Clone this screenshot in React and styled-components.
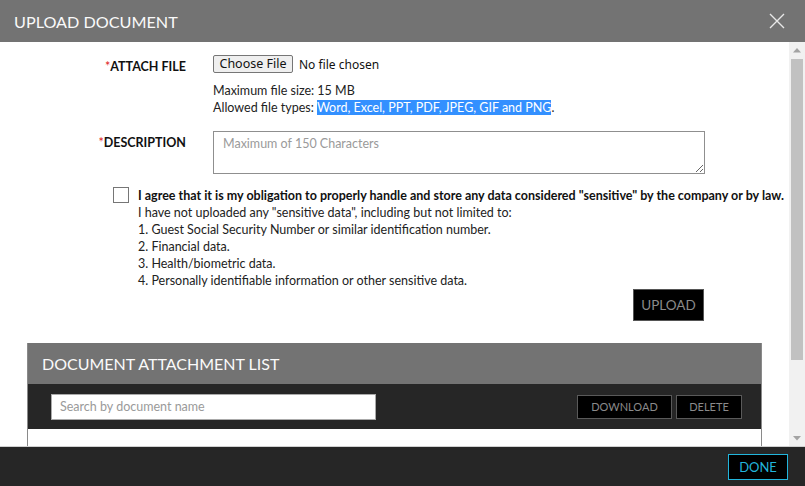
import styled, { createGlobalStyle } from 'styled-components'

const GlobalStyle = createGlobalStyle`
  html, body {
    margin: 0;
    padding: 0;
    background: #ffffff;
  }
  body {
    font-family: Lato, "Liberation Sans", sans-serif;
    color: #222;
  }
  * {
    box-sizing: border-box;
  }
`

const Modal = styled.div`
  width: 805px;
  height: 486px;
  display: flex;
  flex-direction: column;
  background: #fff;
`

const ModalHead = styled.div`
  height: 42px;
  flex-shrink: 0;
  background: #737373;
  display: flex;
  align-items: center;
  justify-content: space-between;
  padding: 0 14px;

  h2 {
    margin: 0;
    color: #fafafa;
    font-size: 16.2px;
    font-weight: 400;
  }
`

const CloseButton = styled.button`
  width: 18px;
  height: 18px;
  padding: 0;
  border: 0;
  background: transparent;
  cursor: pointer;
  display: inline-flex;
  margin-right: 5px;
`

const ModalBody = styled.div`
  flex: 1;
  min-height: 0;
  display: flex;
  background: #fff;
  border-bottom: 1px solid #d0d0d0;
`

const Content = styled.div`
  flex: 1;
  min-width: 0;
  overflow: hidden;
  padding: 13px 0 25px;
`

const ScrollBar = styled.div`
  width: 16px;
  flex-shrink: 0;
  background: #f1f1f1;
  display: flex;
  flex-direction: column;
  align-items: center;
`

const ScrollArrow = styled.div`
  height: 16px;
  width: 16px;
  display: flex;
  align-items: center;
  justify-content: center;
  margin-top: ${({ $down }) => ($down ? 'auto' : '0')};
`

const ScrollThumb = styled.div`
  width: 12px;
  height: 301px;
  margin-top: 1px;
  background: #c1c1c1;
`

const FormRow = styled.div`
  display: grid;
  grid-template-columns: 186px 1fr;
  column-gap: 27px;
  margin-bottom: ${({ $gap }) => $gap || 0}px;
`

const Label = styled.label`
  text-align: right;
  font-size: 12.5px;
  font-weight: 700;
  text-transform: uppercase;
  padding-top: ${({ $top }) => $top || 0}px;
  color: #111;

  span {
    color: #e02020;
    font-weight: 400;
  }
`

const FileLine = styled.div`
  display: flex;
  align-items: center;
  gap: 6px;
  height: 18px;
  font-family: "Noto Sans", "Open Sans", sans-serif;
  font-size: 12px;
  color: #111;
`

const FileButton = styled.button`
  height: 18px;
  width: 80px;
  padding: 0;
  font-family: "Noto Sans", "Open Sans", sans-serif;
  font-size: 12.5px;
  line-height: 16px;
  color: #111;
  background: #efefef;
  border: 1px solid #767676;
  border-radius: 2px;
`

const Hint = styled.div`
  margin-top: 9px;
  font-size: 12.5px;
  line-height: 17px;
  color: #222;

  mark {
    background: #3390ff;
    color: #fff;
  }
`

const TextArea = styled.textarea`
  width: 492px;
  height: 43px;
  resize: vertical;
  border: 1px solid #8f8f8f;
  padding: 4px 9px;
  font-family: Lato, sans-serif;
  font-size: 12.5px;
  color: #222;
  outline: none;

  &::placeholder {
    color: #9a9a9a;
  }
`

const Consent = styled.div`
  display: flex;
  gap: 9px;
  padding-left: 113px;
  margin-top: 10px;
`

const CheckBox = styled.span`
  width: 16px;
  height: 16px;
  flex-shrink: 0;
  border: 1px solid #767676;
  background: #fff;
`

const ConsentText = styled.div`
  font-size: 12.5px;
  line-height: 17px;
  color: #222;

  strong {
    display: block;
    font-weight: 700;
    color: #111;
    white-space: nowrap;
  }
`

const UploadRow = styled.div`
  display: flex;
  justify-content: flex-end;
  padding-right: 85px;
`

const UploadButton = styled.button`
  width: 71px;
  height: 32px;
  background: #000;
  border: 1px solid #555;
  color: #8a8a8a;
  font-family: Lato, sans-serif;
  font-size: 13.5px;
  text-transform: uppercase;
  cursor: pointer;
`

const ListPanel = styled.div`
  margin: 22px 27px 0;
  border-left: 1px solid #8a8a8a;
  border-right: 1px solid #8a8a8a;
`

const ListHead = styled.div`
  height: 41px;
  background: #737373;
  display: flex;
  align-items: center;
  padding: 0 14px;

  h3 {
    margin: 0;
    color: #fafafa;
    font-size: 16px;
    font-weight: 400;
  }
`

const Toolbar = styled.div`
  height: 45px;
  background: #262626;
  display: flex;
  align-items: center;
  justify-content: space-between;
  padding: 0 19px 0 23px;
`

const Search = styled.input`
  width: 325px;
  height: 26px;
  border: 1px solid #aaa;
  padding: 0 8px;
  font-family: Lato, sans-serif;
  font-size: 12.5px;
  outline: none;

  &::placeholder {
    color: #9a9a9a;
  }
`

const ToolButtons = styled.div`
  display: flex;
  gap: 4px;
`

const ToolButton = styled.button`
  height: 24px;
  width: ${({ $w }) => $w}px;
  background: #000;
  border: 1px solid #5a5a5a;
  color: #8a8a8a;
  font-family: Lato, sans-serif;
  font-size: 11px;
  text-transform: uppercase;
  cursor: pointer;
`

const ListArea = styled.div`
  height: 90px;
  background: #fff;
`

const ModalFoot = styled.div`
  height: 39px;
  flex-shrink: 0;
  background: #262626;
  display: flex;
  align-items: center;
  justify-content: flex-end;
  padding: 0 17px 0 0;
`

const DoneButton = styled.button`
  width: 60px;
  height: 26px;
  margin-top: 1px;
  background: #000;
  border: 1px solid #22b5dc;
  color: #22b5dc;
  font-family: Lato, sans-serif;
  font-size: 13px;
  text-transform: uppercase;
  cursor: pointer;
`

const Arrow = ({ down }) => (
  <svg width="8" height="5" viewBox="0 0 8 5">
    <path d={down ? 'M0 0 H8 L4 4.5 Z' : 'M0 4.5 H8 L4 0 Z'} fill="#a3a3a3" />
  </svg>
)

export default function App() {
  return (
    <>
      <GlobalStyle />
      <Modal>
        <ModalHead>
          <h2>UPLOAD DOCUMENT</h2>
          <CloseButton aria-label="Close">
            <svg width="18" height="18" viewBox="0 0 18 18">
              <path d="M2 2 L16 16 M16 2 L2 16" stroke="#e8e8e8" strokeWidth="1.4" fill="none" />
            </svg>
          </CloseButton>
        </ModalHead>

        <ModalBody>
          <Content>
            <FormRow $gap={15}>
              <Label $top={4}>
                <span>*</span>Attach File
              </Label>
              <div>
                <FileLine>
                  <FileButton>Choose File</FileButton>
                  No file chosen
                </FileLine>
                <Hint>
                  Maximum file size: 15 MB
                  <br />
                  Allowed file types: <mark>Word, Excel, PPT, PDF, JPEG, GIF and PNG</mark>.
                </Hint>
              </div>
            </FormRow>

            <FormRow>
              <Label $top={4}>
                <span>*</span>Description
              </Label>
              <div>
                <TextArea placeholder="Maximum of 150 Characters" />
              </div>
            </FormRow>

            <Consent>
              <CheckBox />
              <ConsentText>
                <strong>
                  I agree that it is my obligation to properly handle and store any data considered "sensitive" by the company or by law.
                </strong>
                I have not uploaded any "sensitive data", including but not limited to:
                <br />
                1. Guest Social Security Number or similar identification number.
                <br />
                2. Financial data.
                <br />
                3. Health/biometric data.
                <br />
                4. Personally identifiable information or other sensitive data.
              </ConsentText>
            </Consent>

            <UploadRow>
              <UploadButton>Upload</UploadButton>
            </UploadRow>

            <ListPanel>
              <ListHead>
                <h3>DOCUMENT ATTACHMENT LIST</h3>
              </ListHead>
              <Toolbar>
                <Search placeholder="Search by document name" />
                <ToolButtons>
                  <ToolButton $w={95}>Download</ToolButton>
                  <ToolButton $w={66}>Delete</ToolButton>
                </ToolButtons>
              </Toolbar>
              <ListArea />
            </ListPanel>
          </Content>

          <ScrollBar>
            <ScrollArrow>
              <Arrow />
            </ScrollArrow>
            <ScrollThumb />
            <ScrollArrow $down>
              <Arrow down />
            </ScrollArrow>
          </ScrollBar>
        </ModalBody>

        <ModalFoot>
          <DoneButton>Done</DoneButton>
        </ModalFoot>
      </Modal>
    </>
  )
}
